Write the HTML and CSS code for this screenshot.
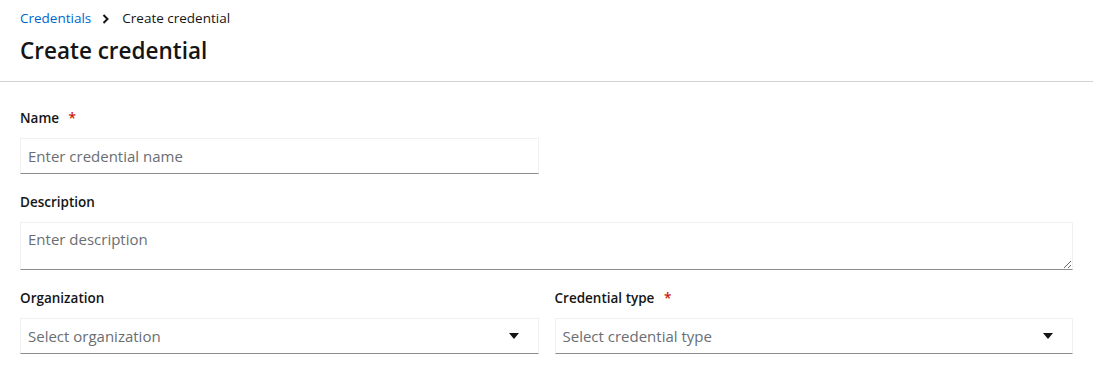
FILE: index.html
```html
<!DOCTYPE html>
<html lang="en">
<head>
    <meta charset="UTF-8">
    <title>Create credential</title>
    <link rel="stylesheet" href="styles.css">
</head>
<body>
    <div class="page-header">
        <nav class="breadcrumb">
            <a href="#" class="crumb-link">Credentials</a>
            <svg class="crumb-sep" width="8" height="10" viewBox="0 0 8 10"><path d="M1.5 1 L5.5 5 L1.5 9" fill="none" stroke="#151515" stroke-width="2"/></svg>
            <span class="crumb-current">Create credential</span>
        </nav>
        <h1 class="title">Create credential</h1>
    </div>

    <form class="form">
        <div class="form-group half">
            <label class="label">Name <span class="required">*</span></label>
            <input type="text" class="control" placeholder="Enter credential name">
        </div>

        <div class="form-group">
            <label class="label">Description</label>
            <textarea class="control textarea" placeholder="Enter description"></textarea>
        </div>

        <div class="form-row">
            <div class="form-group">
                <label class="label">Organization</label>
                <div class="control select">
                    <span class="select-text">Select organization</span>
                    <svg class="caret" width="10" height="6" viewBox="0 0 10 6"><path d="M0 0 H10 L5 6 Z" fill="#151515"/></svg>
                </div>
            </div>
            <div class="form-group">
                <label class="label">Credential type <span class="required">*</span></label>
                <div class="control select">
                    <span class="select-text">Select credential type</span>
                    <svg class="caret" width="10" height="6" viewBox="0 0 10 6"><path d="M0 0 H10 L5 6 Z" fill="#151515"/></svg>
                </div>
            </div>
        </div>
    </form>
</body>
</html>
```

FILE: styles.css
```css
* {
    margin: 0;
    padding: 0;
    box-sizing: border-box;
}

body {
    font-family: 'Open Sans', sans-serif;
    color: #151515;
    background: #fff;
}

.page-header {
    padding: 8px 20px 15px;
    border-bottom: 1px solid #d2d2d2;
}

.breadcrumb {
    display: flex;
    align-items: center;
    font-size: 13.5px;
    line-height: 21px;
}

.crumb-link {
    color: #0066cc;
    text-decoration: none;
}

.crumb-sep {
    margin: 0 12px 0 11px;
}

.title {
    font-size: 22.5px;
    font-weight: 600;
    line-height: 31px;
    margin-top: 6px;
}

.form {
    padding: 26px 20px 20px;
    display: flex;
    flex-direction: column;
    gap: 18px;
}

.form-group {
    display: flex;
    flex-direction: column;
}

.form-group.half {
    width: 519px;
}

.form-row {
    display: grid;
    grid-template-columns: 1fr 1fr;
    gap: 16px;
}

.label {
    font-size: 13.5px;
    font-weight: 600;
    line-height: 21px;
    margin-bottom: 9px;
}

.required {
    color: #c9190b;
    margin-left: 6px;
}

.control {
    height: 36px;
    width: 100%;
    border: 1px solid #f0f0f0;
    border-bottom-color: #8a8d90;
    padding: 0 7px;
    font-family: inherit;
    font-size: 15px;
    color: #151515;
    background: #fff;
    outline: none;
}

.control::placeholder {
    color: #6a6e73;
}

.textarea {
    height: 48px;
    padding: 4px 7px;
    line-height: 24px;
    resize: vertical;
}

.select {
    display: flex;
    align-items: center;
    justify-content: space-between;
    padding-right: 19px;
}

.select-text {
    color: #6a6e73;
}
```
